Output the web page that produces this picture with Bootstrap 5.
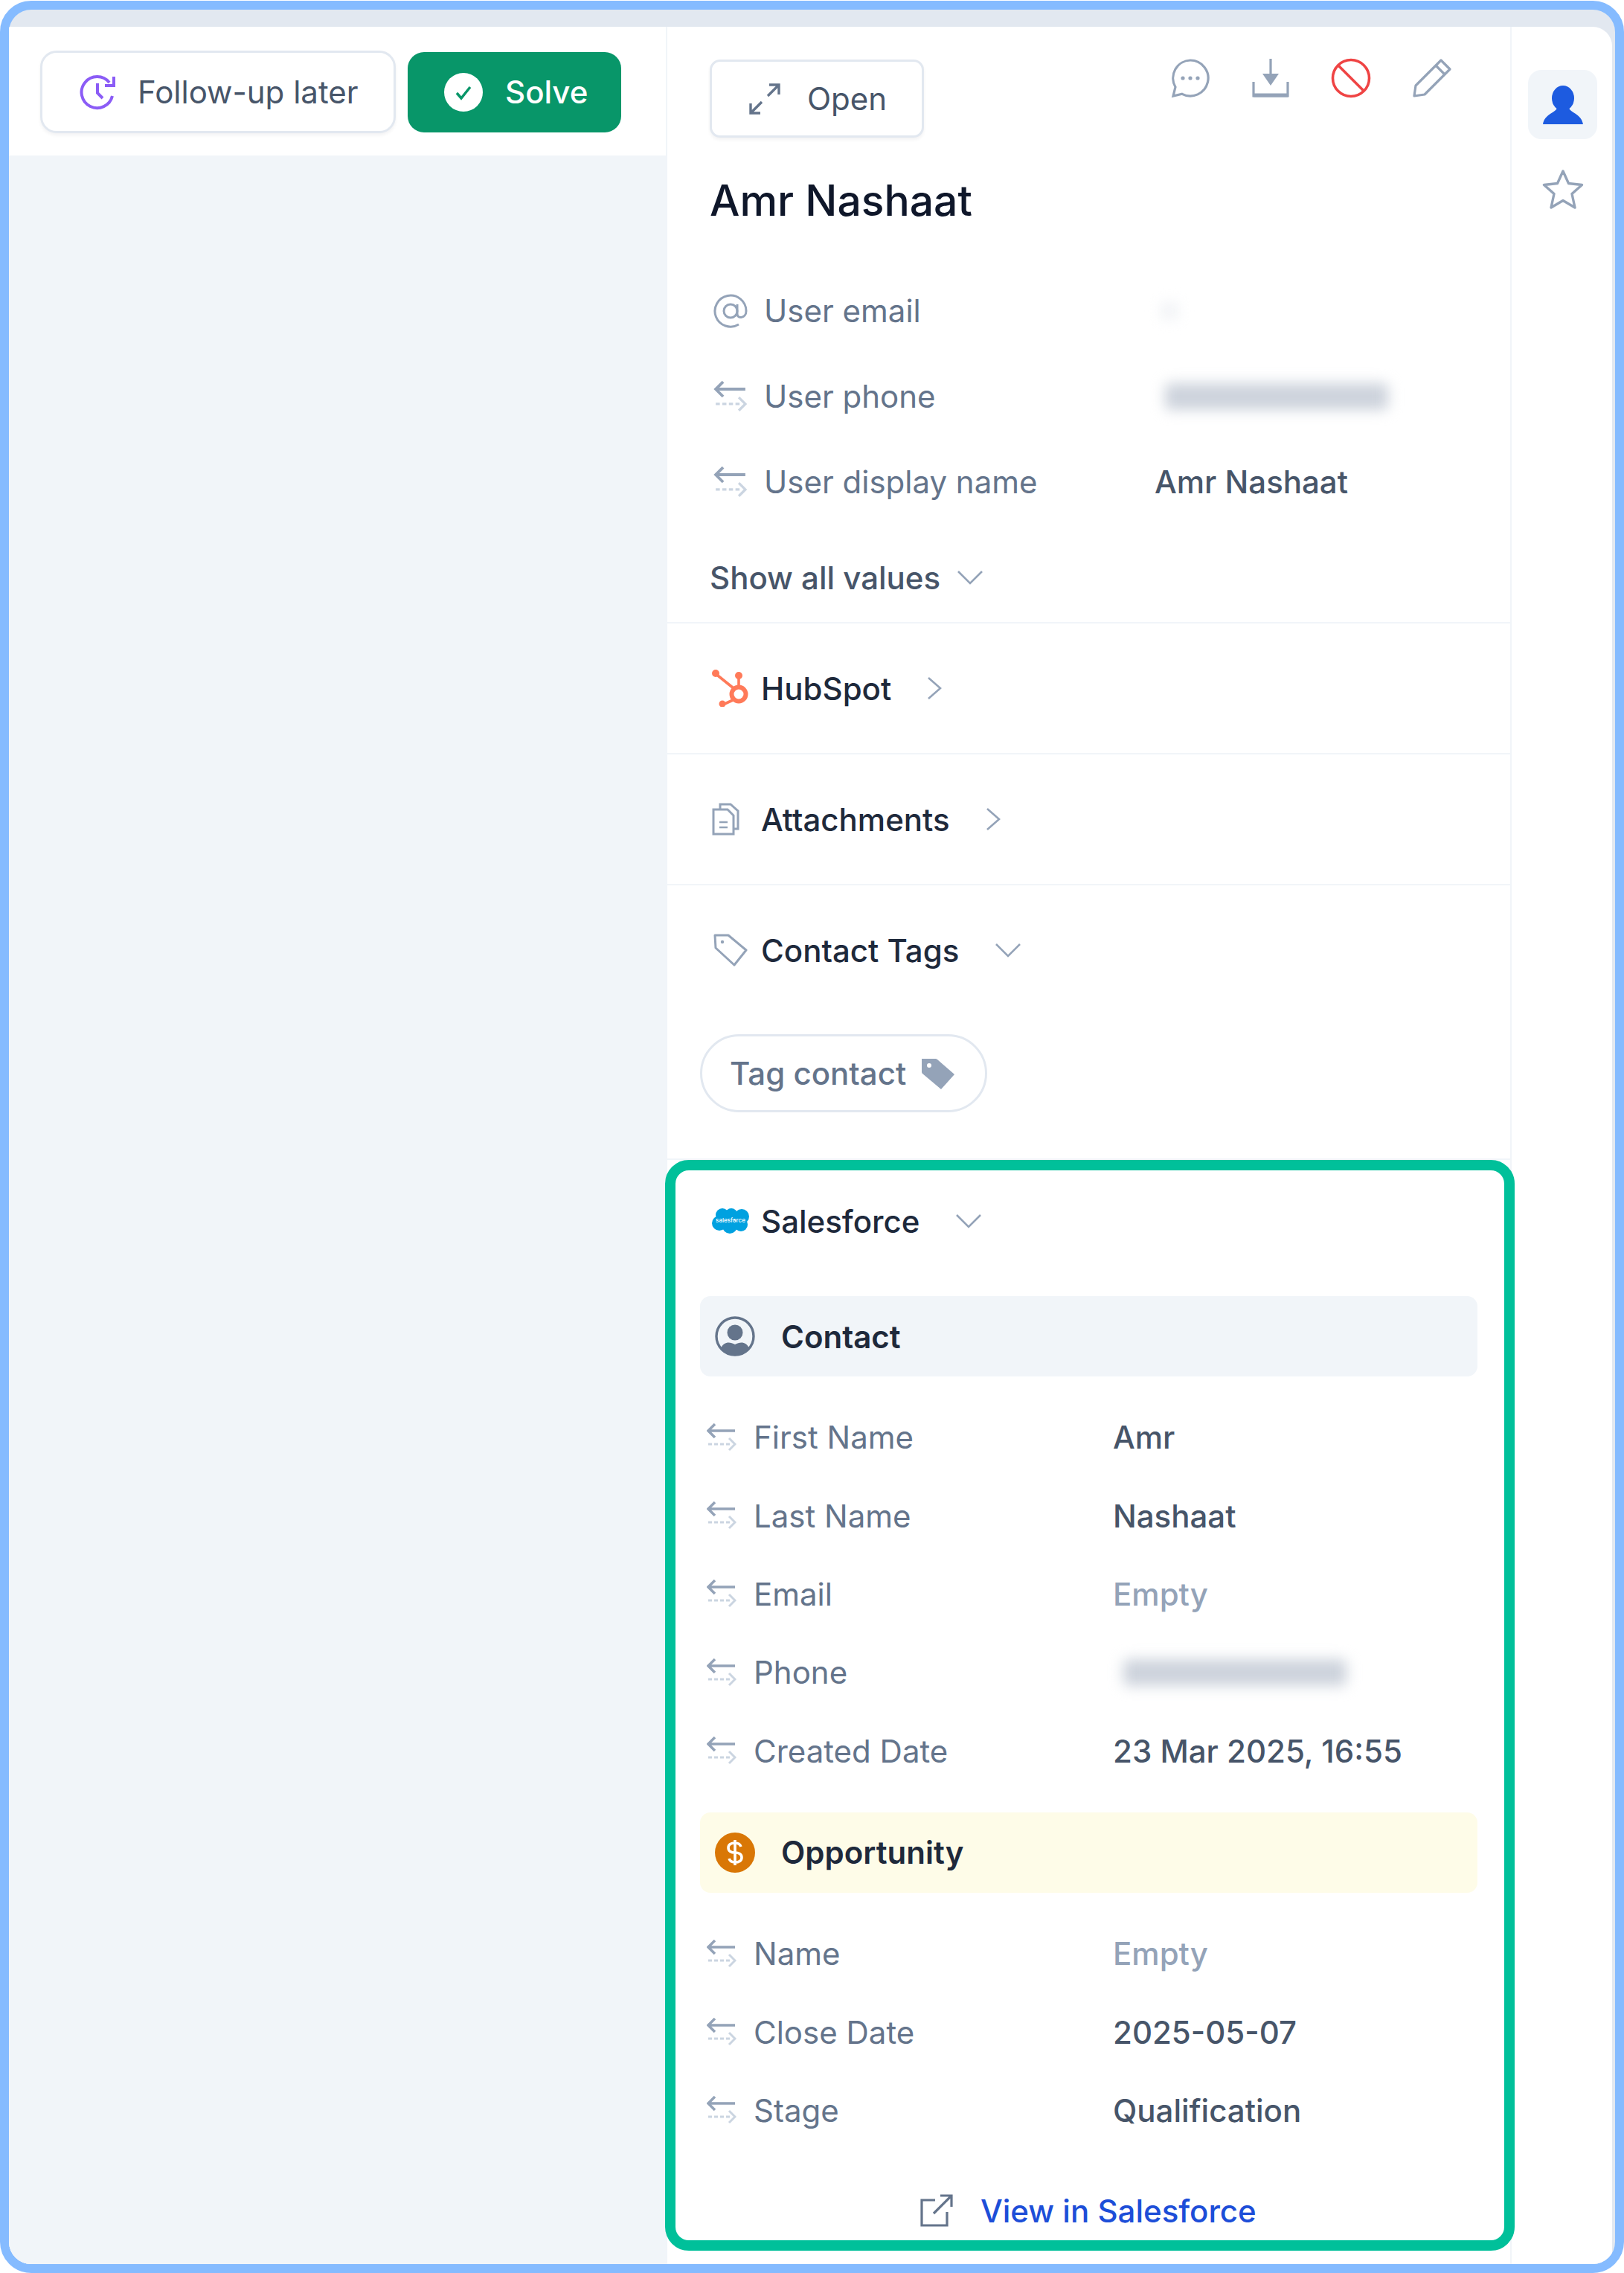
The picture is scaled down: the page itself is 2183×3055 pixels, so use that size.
<!DOCTYPE html>
<html lang="en">
<head>
  <meta charset="UTF-8" />
  <title>Contact details</title>
  <link href="https://cdn.jsdelivr.net/npm/bootstrap@5.3.2/dist/css/bootstrap.min.css" rel="stylesheet">
  <style>
    html, body { margin: 0; background: #fff; }
    body { font-family: Inter, "Liberation Sans", sans-serif; font-size: 42px; color: #475569; }
    .shell { width: 2183px; height: 3054px; margin-top: 1px; border: 12px solid #85bbff; border-radius: 42px; background: #e2e8f0; padding: 23px 4px 0 0; overflow: hidden; }
    .panels { height: 100%; background: #fff; border-top-right-radius: 26px; }
    .queue { width: 883px; background: #f1f5f9; flex: none; }
    .queue-head { height: 173px; background: #fff; padding: 32px 0 0 42px; gap: 16px; }
    .act-btn { font-size: 42px; line-height: 1; border-radius: 22px; display: flex; align-items: center; padding: 0; }
    .act-later { width: 478px; height: 111px; background: #fff; border: 3px solid #e2e8f0; color: #475569; padding-left: 50px; gap: 26px; box-shadow: 0 3px 4px rgba(15,23,42,.05); }
    .act-solve { width: 287px; height: 108px; margin-top: 2px; background: #089669; border: 0; color: #fff; font-weight: 500; padding-left: 49px; gap: 30px; }
    .act-later:hover { background: #fff; color: #475569; }
    .detail { width: 1135px; flex: none; border-left: 2px solid #f1f5f9; }
    .rail { flex: 1; border-left: 2px solid #f1f5f9; padding: 58px 0 0 22px; }
    .rail-on { width: 93px; height: 93px; background: #f1f5f9; border-radius: 18px; }
    .rail-star { width: 93px; margin-top: 40px; }
    .toolbar { padding: 44px 0 0 57px; }
    .act-open { width: 288px; height: 105px; background: #fff; border: 3px solid #e2e8f0; color: #475569; border-radius: 14px; padding-left: 50px; gap: 36px; box-shadow: 0 3px 4px rgba(15,23,42,.05); }
    .tool-icons { gap: 55px; margin-left: 331px; margin-top: -2px; }
    .who { font-size: 57px; font-weight: 500; color: #0f172a; line-height: 70px; margin: 50px 0 0 57px; }
    .attrs { margin-top: 55px; padding-left: 61px; }
    .attr { height: 115px; }
    .attr-icon { width: 48px; flex: none; margin-right: 21px; }
    .attr-name { width: 525px; flex: none; color: #64748b; }
    .attr-val { font-weight: 500; color: #475569; }
    .smudge { display: block; height: 36px; width: 300px; background: #cdd3dc; border-radius: 6px; filter: blur(9px); margin-left: 14px; }
    .smudge-faint { width: 24px; height: 24px; background: #f1f3f6; margin-left: 8px; }
    .more { height: 60px; margin: 41px 0 30px 57px; color: #475569; gap: 22px; font-weight: 500; }
    .fold { height: 176px; border-top: 2px solid #f1f5f9; padding-left: 57px; font-weight: 500; color: #1e293b; }
    .fold-icon { width: 56px; margin-right: 13px; flex: none; }
    .fold-open { border-top: 2px solid #f1f5f9; height: 176px; }
    .tag-btn { width: 386px; height: 105px; margin: 26px 0 0 44px; border: 3px solid #e2e8f0; border-radius: 53px; background: #fff; color: #64748b; padding-left: 37px; gap: 20px; font-weight: 500; }
    .sf { position: relative; margin-top: 62px; border-top: 2px solid #f1f5f9; }
    .sf::after { content: ""; position: absolute; left: -3px; right: -6px; top: 0; height: 1466px; border: 14px solid #00c09a; border-radius: 32px; pointer-events: none; }
    .sf-head { height: 100px; margin-top: 32px; padding-left: 57px; font-weight: 500; color: #1e293b; }
    .band { height: 108px; margin: 51px 0 0 44px; width: 1045px; border-radius: 14px; padding-left: 20px; font-weight: 600; color: #1e293b; gap: 35px; }
    .band-grey { background: #f1f5f9; }
    .band-cream { background: #fefce8; margin-top: 30px; }
    .sf-rows { padding-left: 53px; margin-top: 29px; }
    .sf-row { height: 105.4px; }
    .sf-row .attr-icon { width: 40px; margin-right: 23px; }
    .sf-row .attr-name { width: 483px; }
    .is-empty { color: #94a3b8; }
    .sf-link { height: 60px; margin-top: 52px; padding-left: 340px; gap: 37px; color: #1d4ed8; font-weight: 500; text-decoration: none; }
  </style>
</head>
<body>

<svg width="0" height="0" class="position-absolute">
  <symbol id="mapped" viewBox="0 0 40 38">
    <path d="M38 11H3M11 2 2 11l9 9" transform="translate(0 -1)" fill="none" stroke="#94a3b8" stroke-width="3.5"/>
    <path d="M2 28h30" fill="none" stroke="#cbd5e1" stroke-width="3" stroke-dasharray="5 3"/>
    <path d="m30 20 8 8-8 8" fill="none" stroke="#cbd5e1" stroke-width="3"/>
  </symbol>
  <symbol id="chev-right" viewBox="0 0 20 32"><path d="m2 2 16 14L2 30" fill="none" stroke="#94a3b8" stroke-width="2.6"/></symbol>
  <symbol id="chev-down" viewBox="0 0 36 20"><path d="m2 2 16 16L34 2" fill="none" stroke="#94a3b8" stroke-width="2.6"/></symbol>
</svg>

<div class="shell">
  <div class="panels d-flex">

    <div class="queue">
      <div class="queue-head d-flex align-items-start">
        <button class="btn act-btn act-later">
          <svg width="52" height="50" viewBox="0 0 52 50" fill="none" stroke="#8b5cf6" stroke-width="4"><path d="M44 30A21 21 0 1 1 40 12"/><path d="M46 4v12H34"/><path d="M24 13v13l7 7"/></svg>
          Follow-up later
        </button>
        <button class="btn act-btn act-solve">
          <svg width="52" height="52" viewBox="0 0 52 52"><circle cx="26" cy="26" r="26" fill="#fff"/><path d="m17 27 6 7 12-15" fill="none" stroke="#089669" stroke-width="3.5"/></svg>
          Solve
        </button>
      </div>
    </div>

    <div class="detail">
      <div class="toolbar d-flex align-items-start">
        <button class="btn act-btn act-open">
          <svg width="42" height="42" viewBox="0 0 42 42" fill="none" stroke="#64748b" stroke-width="3.4"><path d="M25 17 40 2M27 2h13v13M17 25 2 40M2 27v13h13"/></svg>
          Open
        </button>
        <div class="tool-icons d-flex align-items-center">
          <svg width="54" height="54" viewBox="0 0 54 54" fill="none" stroke="#94a3b8" stroke-width="3.2"><path d="M27 3a24 24 0 1 1-11 45.300L4 51l3-12A24 24 0 0 1 27 3z"/><g fill="#94a3b8" stroke="none"><circle cx="17" cy="27" r="2.600"/><circle cx="27" cy="27" r="2.600"/><circle cx="37" cy="27" r="2.600"/></g></svg>
          <svg width="52" height="54" viewBox="0 0 52 54" fill="none" stroke="#94a3b8" stroke-width="3.2"><path d="M3 32v19h46V32"/><path d="M3 50h46" stroke-width="5"/><path d="M26 1v20"/><path d="M15 21h22L26 37z" fill="#94a3b8" stroke="none"/></svg>
          <svg width="54" height="54" viewBox="0 0 54 54" fill="none" stroke="#ef4444" stroke-width="3.600"><circle cx="27" cy="27" r="24.500"/><path d="m10 10 34 34"/></svg>
          <svg width="54" height="54" viewBox="0 0 54 54" fill="none" stroke="#94a3b8" stroke-width="3.2" stroke-linejoin="round"><path d="M39 3 51 15 17 49 3 51l2-14z"/><path d="m32 10 12 12"/></svg>
        </div>
      </div>

      <div class="who">Amr Nashaat</div>

      <div class="attrs">
        <div class="attr d-flex align-items-center">
          <svg class="attr-icon" width="48" height="50" viewBox="0 0 48 50" fill="none" stroke="#94a3b8" stroke-width="3"><circle cx="24" cy="25" r="9"/><path d="M33 16v13c0 7 12 6 12-4a21 21 0 1 0-10 18"/></svg>
          <span class="attr-name">User email</span>
          <span class="smudge smudge-faint"></span>
        </div>
        <div class="attr d-flex align-items-center">
          <svg class="attr-icon" width="48" height="42"><use href="#mapped"/></svg>
          <span class="attr-name">User phone</span>
          <span class="smudge"></span>
        </div>
        <div class="attr d-flex align-items-center">
          <svg class="attr-icon" width="48" height="42"><use href="#mapped"/></svg>
          <span class="attr-name">User display name</span>
          <span class="attr-val">Amr Nashaat</span>
        </div>
      </div>

      <div class="more d-flex align-items-center">Show all values
        <svg width="36" height="20"><use href="#chev-down"/></svg>
      </div>

      <div class="fold d-flex align-items-center">
        <svg class="fold-icon" width="50" height="50" viewBox="0 0 50 50" fill="none" stroke="#ff7a59"><circle cx="36" cy="33" r="9.500" stroke-width="6"/><path d="M36 23V11M3 4l26 21M28 41l-13 6" stroke-width="3.600"/><g fill="#ff7a59" stroke="none"><circle cx="36" cy="8" r="5"/><circle cx="5" cy="5" r="5"/><circle cx="14" cy="46" r="4.500"/></g></svg>
        <span>HubSpot</span>
        <svg class="ms-5" width="20" height="32"><use href="#chev-right"/></svg>
      </div>
      <div class="fold d-flex align-items-center">
        <svg class="fold-icon" width="56" height="44" viewBox="0 0 56 44" fill="none" stroke="#94a3b8" stroke-width="3"><path d="M5 9h19l8 8v25H5z"/><path d="M14 9V2h14l10 9v24h-6"/><path d="M13 26h11M13 33h11" stroke-width="2.400"/></svg>
        <span>Attachments</span>
        <svg class="ms-5" width="20" height="32"><use href="#chev-right"/></svg>
      </div>
      <div class="fold d-flex align-items-center">
        <svg class="fold-icon" width="46" height="46" viewBox="0 0 46 46" fill="none" stroke="#94a3b8" stroke-width="3" stroke-linejoin="round"><path d="M2 3h18l24 20-16 20L3 20z"/><circle cx="12" cy="12" r="2.200" fill="#94a3b8" stroke="none"/></svg>
        <span>Contact Tags</span>
        <svg class="ms-5" width="36" height="20"><use href="#chev-down"/></svg>
      </div>
      <button class="btn act-btn tag-btn">
        Tag contact
        <svg width="46" height="44" viewBox="0 0 46 44"><path d="M1 2h18a4 4 0 0 1 3 1l23 20-18 20L2 22a4 4 0 0 1-1-3z" fill="#94a3b8"/><circle cx="11" cy="11" r="3" fill="#fff"/></svg>
      </button>

      <section class="sf">
        <div class="sf-head d-flex align-items-center">
          <svg class="fold-icon" width="52" height="36" viewBox="0 0 52 36"><g fill="#00a1e0"><circle cx="15" cy="10" r="9"/><circle cx="27" cy="9" r="8"/><circle cx="41" cy="12" r="10"/><circle cx="11" cy="21" r="10"/><circle cx="25" cy="25" r="10"/><circle cx="40" cy="23" r="9"/></g><text x="26" y="20" text-anchor="middle" font-size="8" font-family="Inter, sans-serif" fill="#fff">salesforce</text></svg>
          <span>Salesforce</span>
          <svg class="ms-5" width="36" height="20"><use href="#chev-down"/></svg>
        </div>

        <div class="band band-grey d-flex align-items-center">
          <svg width="54" height="54" viewBox="0 0 54 54"><circle cx="27" cy="27" r="25" fill="none" stroke="#64748b" stroke-width="3.400"/><circle cx="27" cy="22" r="10.500" fill="#64748b"/><path d="M8 43c4-9 12-9 19-5 7-4 15-4 19 5-9 11-29 11-38 0z" fill="#64748b"/></svg>
          <span>Contact</span>
        </div>
        <div class="sf-rows">
          <div class="sf-row d-flex align-items-center"><svg class="attr-icon" width="40" height="38"><use href="#mapped"/></svg><span class="attr-name">First Name</span><span class="attr-val">Amr</span></div>
          <div class="sf-row d-flex align-items-center"><svg class="attr-icon" width="40" height="38"><use href="#mapped"/></svg><span class="attr-name">Last Name</span><span class="attr-val">Nashaat</span></div>
          <div class="sf-row d-flex align-items-center"><svg class="attr-icon" width="40" height="38"><use href="#mapped"/></svg><span class="attr-name">Email</span><span class="attr-val is-empty">Empty</span></div>
          <div class="sf-row d-flex align-items-center"><svg class="attr-icon" width="40" height="38"><use href="#mapped"/></svg><span class="attr-name">Phone</span><span class="smudge"></span></div>
          <div class="sf-row d-flex align-items-center"><svg class="attr-icon" width="40" height="38"><use href="#mapped"/></svg><span class="attr-name">Created Date</span><span class="attr-val">23 Mar 2025, 16:55</span></div>
        </div>

        <div class="band band-cream d-flex align-items-center">
          <svg width="54" height="54" viewBox="0 0 54 54"><circle cx="27" cy="27" r="27" fill="#d97706"/><path d="M35 19c-1-3-4-5-8-5-5 0-9 2-9 6.500S22 27 27 27s9 2 9 6.500-4 6.500-9 6.500c-4 0-7-2-8-5M27 10v34" fill="none" stroke="#fff" stroke-width="3.600"/></svg>
          <span>Opportunity</span>
        </div>
        <div class="sf-rows">
          <div class="sf-row d-flex align-items-center"><svg class="attr-icon" width="40" height="38"><use href="#mapped"/></svg><span class="attr-name">Name</span><span class="attr-val is-empty">Empty</span></div>
          <div class="sf-row d-flex align-items-center"><svg class="attr-icon" width="40" height="38"><use href="#mapped"/></svg><span class="attr-name">Close Date</span><span class="attr-val">2025-05-07</span></div>
          <div class="sf-row d-flex align-items-center"><svg class="attr-icon" width="40" height="38"><use href="#mapped"/></svg><span class="attr-name">Stage</span><span class="attr-val">Qualification</span></div>
        </div>

        <a href="#" class="sf-link d-flex align-items-center">
          <svg width="44" height="44" viewBox="0 0 44 44" fill="none" stroke="#64748b" stroke-width="3.200"><path d="M20 8H2v34h34V24"/><path d="M18 26 42 2M27 2h15v15"/></svg>
          View in Salesforce
        </a>
      </section>
    </div>

    <div class="rail">
      <div class="rail-on d-flex align-items-center justify-content-center">
        <svg width="54" height="52" viewBox="0 0 54 52"><ellipse cx="27" cy="17" rx="15" ry="17" fill="#1d5be0"/><path d="M19 30h16c1 6 17 8 19 22H0c2-14 18-16 19-22z" fill="#1d5be0"/></svg>
      </div>
      <div class="rail-star d-flex justify-content-center">
        <svg width="56" height="56" viewBox="0 0 56 56" fill="none" stroke="#94a3b8" stroke-width="3.400" stroke-linejoin="round"><path d="m28 3 7.500 16.500 18 2L40 33.500 44 52 28 42.500 12 52l4-18.500L2.500 21.500l18-2z"/></svg>
      </div>
    </div>

  </div>
</div>

</body>
</html>
